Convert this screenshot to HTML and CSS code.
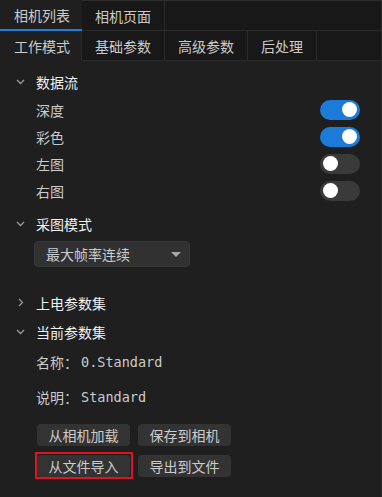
FILE: index.html
```html
<!DOCTYPE html>
<html lang="zh-CN">
<head>
  <meta charset="UTF-8">
  <title>相机页面</title>
  <link rel="stylesheet" href="styles.css">
</head>
<body>

  <div class="window">
    <div class="tabs top-tabs">
      <div class="tab current">相机列表</div>
      <div class="tab">相机页面</div>
      <div class="tab-fill"></div>
    </div>

    <div class="tabs page-tabs">
      <div class="tab active">工作模式</div>
      <div class="tab">基础参数</div>
      <div class="tab">高级参数</div>
      <div class="tab">后处理</div>
      <div class="tab-fill"></div>
    </div>

    <div class="panel">
      <div class="group-head first">
        <svg class="chevron" width="9" height="6" viewBox="0 0 9 6"><path d="M1 1 L4.5 4.5 L8 1" /></svg>
        数据流
      </div>
      <div class="row"><span>深度</span><span class="switch on"></span></div>
      <div class="row"><span>彩色</span><span class="switch on"></span></div>
      <div class="row"><span>左图</span><span class="switch"></span></div>
      <div class="row"><span>右图</span><span class="switch"></span></div>

      <div class="group-head mode">
        <svg class="chevron" width="9" height="6" viewBox="0 0 9 6"><path d="M1 1 L4.5 4.5 L8 1" /></svg>
        采图模式
      </div>
      <div class="select">
        <span>最大帧率连续</span>
        <span class="arrow"></span>
      </div>

      <div class="group-head power">
        <svg class="chevron" width="9" height="9" viewBox="0 0 9 9"><path d="M3 1 L6.5 4.5 L3 8" /></svg>
        上电参数集
      </div>
      <div class="group-head">
        <svg class="chevron" width="9" height="6" viewBox="0 0 9 6"><path d="M1 1 L4.5 4.5 L8 1" /></svg>
        当前参数集
      </div>

      <div class="info name"><span class="key">名称：</span><span class="val">0.Standard</span></div>
      <div class="info desc"><span class="key">说明：</span><span class="val">Standard</span></div>

      <div class="buttons">
        <button>从相机加载</button>
        <button>保存到相机</button>
      </div>
      <div class="buttons second">
        <button class="marked">从文件导入</button>
        <button>导出到文件</button>
      </div>
    </div>
  </div>

</body>
</html>
```

FILE: styles.css
```css
* {
  box-sizing: border-box;
  margin: 0;
  padding: 0;
}

body {
  font-family: "Noto Sans CJK SC", "Noto Sans", sans-serif;
  font-size: 14px;
  background: #1f1f1f;
  color: #cccccc;
  width: 382px;
  height: 497px;
  overflow: hidden;
}

.window {
  height: 497px;
  border-right: 1px solid #2b2b2b;
}

/* tab rows */
.tabs {
  display: flex;
  background: #181818;
}

.top-tabs {
  height: 31px;
}

.page-tabs {
  height: 30px;
}

.tab {
  padding: 0 13px;
  display: flex;
  align-items: center;
  color: #cccccc;
  white-space: nowrap;
}

.top-tabs .tab {
  border-top: 1px solid #2e2e2e;
  border-right: 1px solid #2b2b2b;
  border-bottom: 1px solid #2b2b2b;
}

.top-tabs .tab.current {
  background: #1f1f1f;
  border-top-color: #1f1f1f;
  border-right: none;
  border-bottom: 2px solid #1f7fd8;
  width: 82px;
  padding-left: 14px;
}

.top-tabs .tab-fill {
  flex: 1;
  border-top: 1px solid #2e2e2e;
  border-bottom: 1px solid #2b2b2b;
}

.page-tabs .tab {
  border-right: 1px solid #2b2b2b;
  border-bottom: 1px solid #2b2b2b;
}

.page-tabs .tab.active {
  background: #1f1f1f;
  border-bottom-color: #1f1f1f;
  padding-left: 14px;
  width: 82px;
}

.page-tabs .tab-fill {
  flex: 1;
  border-bottom: 1px solid #2b2b2b;
}

/* panel */
.panel {
  padding-right: 21px;
}

.group-head {
  height: 29px;
  display: flex;
  align-items: center;
  color: #f0f0f0;
}

.group-head.first {
  margin-top: 7px;
  height: 28px;
}

.group-head.mode {
  margin-top: 6px;
  height: 28px;
}

.group-head.power {
  margin-top: 21px;
}

.chevron {
  margin-left: 16px;
  margin-right: 11px;
  fill: none;
  stroke: #9a9a9a;
  stroke-width: 1.3;
}

.row {
  height: 27px;
  padding-left: 36px;
  display: flex;
  align-items: center;
  justify-content: space-between;
}

.switch {
  position: relative;
  width: 40px;
  height: 20px;
  border-radius: 10px;
  background: #3a3a3a;
}

.switch::after {
  content: "";
  position: absolute;
  top: 2.5px;
  left: 3px;
  width: 15px;
  height: 15px;
  border-radius: 50%;
  background: #ffffff;
}

.switch.on {
  background: #1c7ad8;
}

.switch.on::after {
  left: 22px;
}

.select {
  margin: 3px 0 0 34px;
  width: 156px;
  height: 26px;
  border-radius: 4px;
  background: #313131;
  border: 1px solid #383838;
  display: flex;
  align-items: center;
  justify-content: space-between;
  padding: 0 8px 0 11px;
  color: #cccccc;
}

.arrow {
  width: 0;
  height: 0;
  border-left: 5px solid transparent;
  border-right: 5px solid transparent;
  border-top: 5px solid #a8a8a8;
}

.info {
  padding-left: 36px;
  height: 24px;
  display: flex;
  align-items: center;
}

.info.name {
  margin-top: 4px;
}

.info.desc {
  margin-top: 11px;
}

.info .val {
  font-family: "DejaVu Sans Mono", monospace;
  font-size: 13.5px;
  margin-left: 3px;
}

.buttons {
  display: flex;
  gap: 8px;
  margin: 15px 0 0 37px;
}

.buttons.second {
  margin-top: 9px;
}

button {
  width: 93px;
  height: 22px;
  border: none;
  border-radius: 4px;
  background: #333333;
  color: #cccccc;
  font-family: "Noto Sans CJK SC", sans-serif;
  font-size: 14px;
}

/* red highlight frame drawn over the button */
button.marked {
  position: relative;
}

button.marked::after {
  content: "";
  position: absolute;
  top: -3px;
  left: -2px;
  right: -3px;
  bottom: -2px;
  border: 2px solid #e0141e;
}
```
